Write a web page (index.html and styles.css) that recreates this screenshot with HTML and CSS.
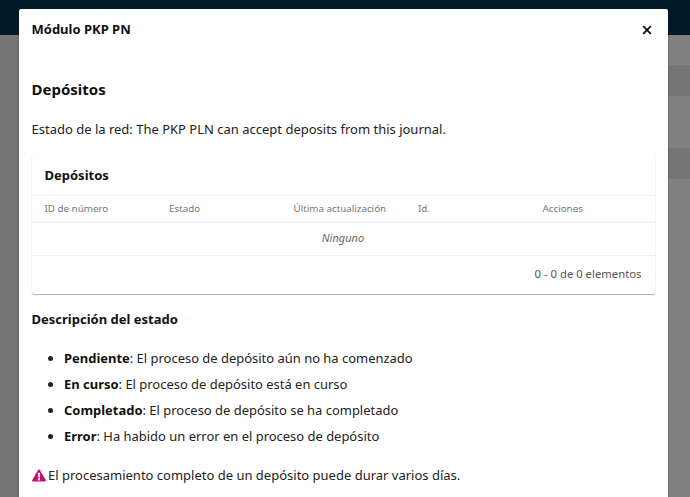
FILE: index.html
```html
<!DOCTYPE html>
<html lang="es">
<head>
<meta charset="utf-8">
<title>Módulo PKP PN</title>
<link rel="stylesheet" href="styles.css">
</head>
<body>
<div class="backdrop">
  <div class="topbar"></div>
  <div class="band band-a"></div>
  <div class="band band-b"></div>
  <div class="band band-c"></div>
  <div class="band band-d"></div>
  <div class="band band-e"></div>
</div>
<div class="modal">
  <header class="modal-head">
    <h1 class="modal-title">Módulo PKP PN</h1>
    <svg class="close" width="10" height="10" viewBox="0 0 10 10" aria-label="Cerrar"><path d="M1.2 1.200l7.600 7.600M8.800 1.200L1.200 8.800" stroke="#111" stroke-width="1.800" fill="none"/></svg>
  </header>
  <div class="modal-body">
    <h2 class="section-title">Depósitos</h2>
    <p class="status">Estado de la red: The PKP PLN can accept deposits from this journal.</p>
    <section class="panel">
      <h3 class="panel-title">Depósitos</h3>
      <div class="cols">
        <span class="col">ID de número</span>
        <span class="col">Estado</span>
        <span class="col">Última actualización</span>
        <span class="col">Id.</span>
        <span class="col">Acciones</span>
      </div>
      <div class="empty">Ninguno</div>
      <div class="pager">0 - 0 de 0 elementos</div>
    </section>
    <h4 class="desc-title">Descripción del estado</h4>
    <ul class="desc-list">
      <li><b>Pendiente</b>: El proceso de depósito aún no ha comenzado</li>
      <li><b>En curso</b>: El proceso de depósito está en curso</li>
      <li><b>Completado</b>: El proceso de depósito se ha completado</li>
      <li><b>Error</b>: Ha habido un error en el proceso de depósito</li>
    </ul>
    <p class="warn"><svg class="warn-icon" width="14" height="13" viewBox="0 0 14 13"><path fill-rule="evenodd" d="M7 .5c.4 0 .7.2.9.5l5.800 10c.4.7-.1 1.500-.9 1.500H1.200c-.8 0-1.300-.8-.9-1.500L6.100 1c.2-.3.5-.5.900-.5zM5.900 3.800l.2 4.600h1.800l.2-4.600zM7 9a1.200 1.200 0 1 0 0 2.400A1.200 1.200 0 0 0 7 9z" fill="#d00a6c"/></svg><span>El procesamiento completo de un depósito puede durar varios días.</span></p>
  </div>
</div>
</body>
</html>
```
FILE: styles.css
```css
* { box-sizing: border-box; }
html, body { margin: 0; height: 100%; overflow: hidden; }
body {
  position: relative;
  background: #757575;
  font-family: "Noto Sans", "Open Sans", sans-serif;
  font-size: 13px;
  line-height: 20px;
  color: #222;
}
.backdrop { position: absolute; inset: 0; display: flex; flex-direction: column; }
.topbar { height: 35px; background: #00192a; }
.band { margin-left: 19px; }
.band-a { height: 30px; background: #808080; }
.band-b { height: 31px; background: #757575; }
.band-c { height: 52px; background: #808080; }
.band-d { height: 31px; background: #757575; }
.band-e { flex: 1; background: #808080; }
.modal {
  position: absolute;
  left: 19px;
  top: 9px;
  width: 649px;
  height: 520px;
  background: #fff;
  border-radius: 2px;
  box-shadow: 0 0 2px rgba(0,0,0,.4);
}
.modal-head { display: flex; justify-content: space-between; align-items: center; padding: 9px 16px 0 12.500px; height: 31px; }
.modal-title { margin: 0; font-size: 13px; font-weight: 700; line-height: 20px; color: #111; }
.close { display: block; margin-top: 2px; }
.modal-body { padding: 0 13.500px 0 12.500px; }
.section-title { margin: 39px 0 0; font-size: 15px; line-height: 20px; font-weight: 700; color: #111; }
.status { margin: 20px 0 0; font-size: 13px; line-height: 20px; }
.panel {
  margin-top: 17px;
  background: #fff;
  border-radius: 2px;
  box-shadow: 0 1px 1px rgba(0,0,0,.3), 0 0 1px rgba(0,0,0,.12);
}
.panel-title { margin: 0; padding: 9px 13px 10px; height: 40px; font-size: 13px; line-height: 20px; font-weight: 700; color: #111; border-bottom: 1px solid #eee; }
.cols { display: grid; grid-template-columns: repeat(5, 124.500px); padding: 1px 0 0 13px; height: 27px; align-items: center; font-size: 9.800px; color: #777; border-bottom: 2px solid #f3f3f3; }
.empty { height: 33px; padding-bottom: 2px; display: flex; align-items: center; justify-content: center; font-size: 11px; font-style: italic; color: #666; border-bottom: 1px solid #eee; }
.pager { height: 38px; padding: 0 13px 2px 0; display: flex; align-items: center; justify-content: flex-end; font-size: 11.300px; color: #555; }
.desc-title { margin: 15px 0 0; font-size: 13px; line-height: 20px; font-weight: 700; color: #111; }
.desc-list { margin: 19px 0 0; padding: 0 0 0 32.500px; font-size: 12.960px; }
.desc-list li { line-height: 20px; margin-bottom: 6px; }
.desc-list b { color: #111; }
.warn { margin: 19px 0 0; font-size: 13px; line-height: 20px; display: flex; align-items: center; gap: 2.500px; }
.warn-icon { display: block; flex: none; }
```
